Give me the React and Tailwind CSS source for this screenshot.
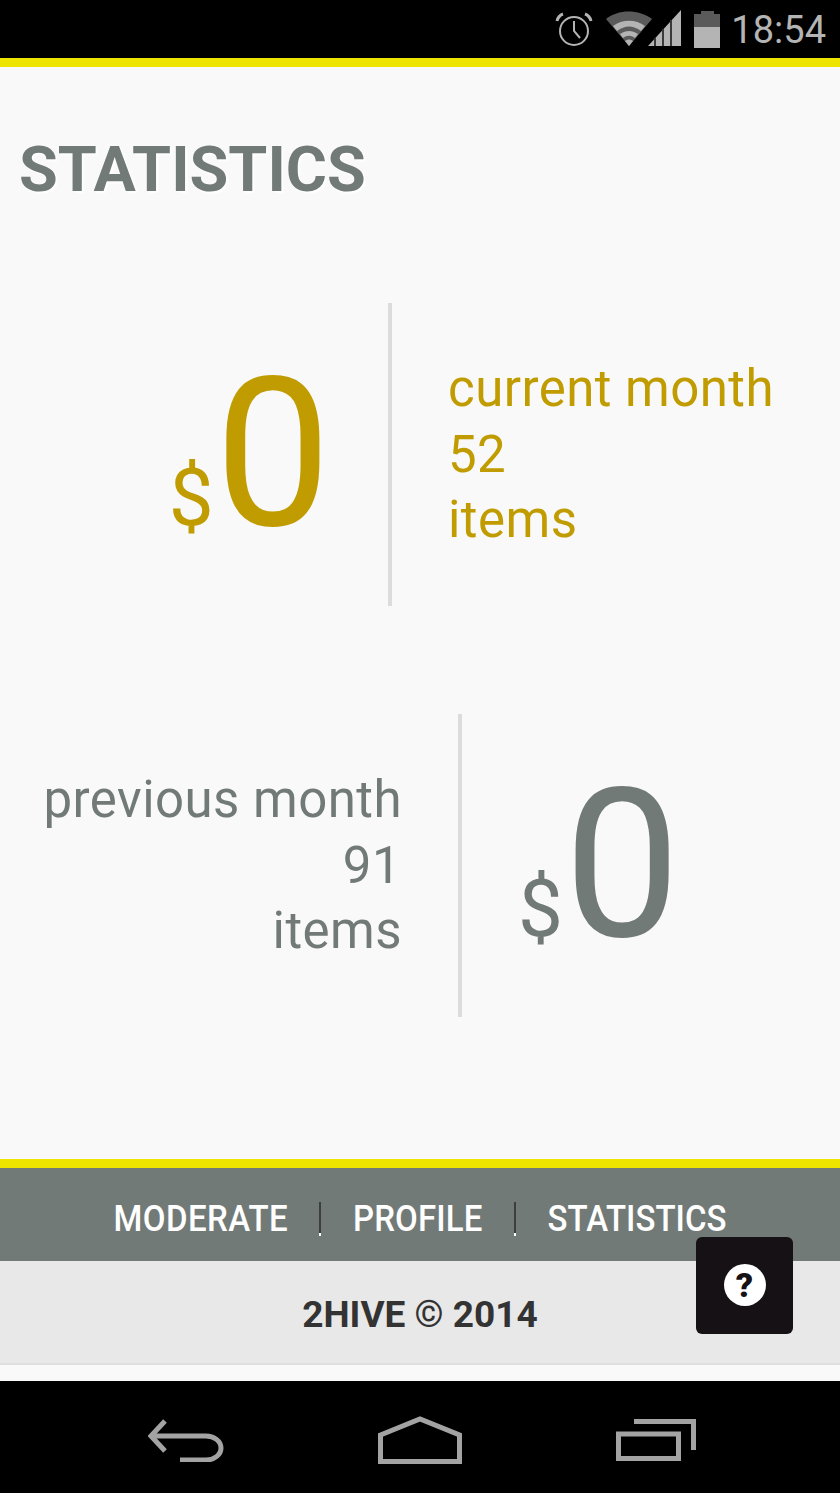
import React from 'react';

const Alarm = () => (
  <svg width="38" height="38" viewBox="0 0 38 38" fill="none" stroke="#b4b4b4" strokeWidth="2">
    <circle cx="19" cy="21" r="14" />
    <path d="M19 11v10l6 7" />
    <path d="M2 11c1-4 3-6 6-7M36 11c-1-4-3-6-6-7" strokeWidth="3" />
  </svg>
);

const Wifi = () => (
  <svg width="76" height="38" viewBox="0 0 76 38">
    <path d="M0 9C12-1 33-1 46 9L23 36Z" fill="#5a5a5a" />
    <path d="M7 16C16 9 30 9 39 16L35 21C27 15 19 15 11 21Z" fill="#b4b4b4" />
    <path d="M14 24C20 20 26 20 32 24L29 28C25 25 21 25 17 28Z" fill="#b4b4b4" />
    <path d="M19 31C22 29 24 29 27 31L23 36Z" fill="#b4b4b4" />
    <path d="M42 36 75 0V36Z" fill="#b4b4b4" />
    <path d="M49 28V36M57 19V36M65 10V36" stroke="#3a3a3a" strokeWidth="2" />
  </svg>
);

const Battery = () => (
  <div className="flex flex-col items-center w-[26px] h-[37px]">
    <div className="w-[13px] h-[3px] bg-[#5a5a5a]" />
    <div className="w-full h-[13px] bg-[#5a5a5a]" />
    <div className="w-full flex-1 bg-[#b4b4b4]" />
  </div>
);

const BackIcon = () => (
  <svg width="78" height="44" viewBox="0 0 78 44" fill="none" stroke="#a3a3a3" strokeWidth="5">
    <path d="M17 3 3 18 17 33" strokeLinejoin="miter" />
    <path d="M4 18H58C66 18 73 23 73 30C73 37 66 42 58 42H32" />
  </svg>
);

const HomeIcon = () => (
  <svg width="84" height="48" viewBox="0 0 84 48" fill="none" stroke="#a3a3a3" strokeWidth="5">
    <path d="M2.500 19 42 3 81.500 19V45.500H2.500Z" />
  </svg>
);

const RecentIcon = () => (
  <svg width="80" height="42" viewBox="0 0 80 42" fill="none" stroke="#a3a3a3" strokeWidth="5">
    <path d="M18 2.500H77.500V31" />
    <rect x="2.500" y="15" width="60" height="24.500" />
  </svg>
);

const StatBlock = ({ color, label, count, amount, reverse }) => {
  const text = (
    <div className={`flex-none text-[51px] tracking-[0.45px] leading-[65.500px] ${reverse ? 'w-[402px] text-right' : 'w-[400px] text-left pl-[56px]'}`}>
      <div>{label}</div>
      <div className={reverse ? 'pr-[1px]' : ''}>{count}</div>
      <div>items</div>
    </div>
  );
  const money = (
    <div className={`flex items-baseline ${reverse ? 'pl-[56px]' : 'justify-end w-[388px] pr-[57px]'}`}>
      <span className="text-[80px] leading-none mr-[1px]">$</span>
      <span className="text-[207px] leading-none">{amount}</span>
    </div>
  );
  return (
    <div className="flex items-center" style={{ color }}>
      {reverse ? text : money}
      <div className={`w-[4px] h-[303px] bg-[#dcdcdc] flex-none ${reverse ? 'ml-[56px]' : ''}`} />
      {reverse ? money : text}
    </div>
  );
};

const NavDivider = () => (
  <span className="w-[2px] h-[34px] mt-[1px] ml-[31px] mr-[32px] bg-[#3e3e3e] border-b-[3px] border-white" />
);

const App = () => {
  return (
    <div className="relative w-[840px] h-[1493px] overflow-hidden flex flex-col bg-black font-['Roboto',sans-serif]">
      {/* status bar */}
      <div className="h-[58px] flex-none flex items-center justify-end gap-[12px] pr-[14px] text-[38px] text-[#b4b4b4]">
        <div className="mr-[1px]"><Alarm /></div>
        <Wifi />
        <Battery />
        <span className="-ml-[1px] pt-[3px]">18:54</span>
      </div>
      <div className="h-[9px] flex-none bg-[#ede500]" />

      {/* content */}
      <div className="h-[1092px] flex-none bg-[#f9f9f9]">
        <h1 className="mt-[65px] ml-[19px] text-[63px] leading-[76px] font-bold text-[#727a78] [text-shadow:2px_2px_2px_#fff]">
          STATISTICS
        </h1>
        <div className="mt-[95px] flex flex-col gap-[108px]">
          <StatBlock color="#c09c00" label="current month" count="52" amount="0" />
          <StatBlock color="#727a78" label="previous month" count="91" amount="0" reverse />
        </div>
      </div>

      <div className="h-[9px] flex-none bg-[#ede500]" />
      {/* nav */}
      <div className="h-[93px] flex-none bg-[#727a78] flex items-center justify-center pt-[8px] text-[33px] font-medium text-white">
        <span className="scale-y-[1.12] tracking-[0.4px]">MODERATE</span>
        <NavDivider />
        <span className="scale-y-[1.12] tracking-[0.15px]">PROFILE</span>
        <NavDivider />
        <span className="scale-y-[1.12]">STATISTICS</span>
      </div>
      {/* footer */}
      <div className="h-[104px] flex-none bg-[#e8e8e8] border-b-2 border-[#dedede] flex items-center justify-center pt-[5px] text-[37px] font-bold text-[#333333]">
        2HIVE © 2014
      </div>
      <div className="h-[16px] flex-none bg-[#f9f9f9]" />

      {/* nav buttons */}
      <div className="flex-1 flex items-center pt-[5px] pl-[148px] gap-[152px]">
        <BackIcon />
        <HomeIcon />
        <div className="ml-[2px]"><RecentIcon /></div>
      </div>

      {/* help button */}
      <div className="absolute left-[696px] top-[1237px] w-[97px] h-[97px] rounded-[6px] bg-[#161114] flex items-center justify-center pb-[2px]">
        <div className="w-[42px] h-[42px] rounded-full bg-white flex items-center justify-center text-[34px] leading-none font-black text-[#161114]">
          ?
        </div>
      </div>
    </div>
  );
};

export default App;
